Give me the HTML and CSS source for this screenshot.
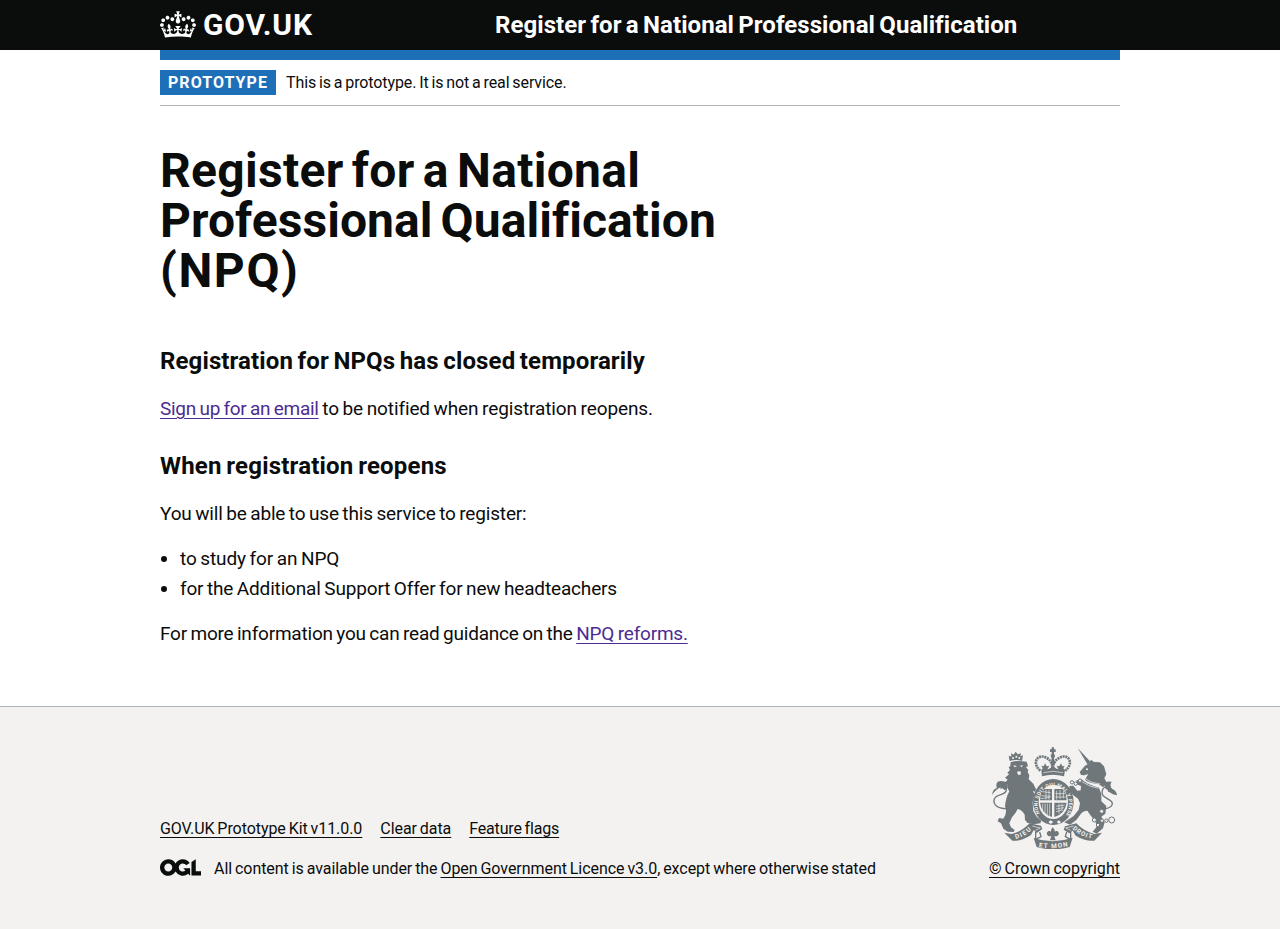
FILE: index.html
```html
<!DOCTYPE html>
<html lang="en">
<head>
<meta charset="utf-8">
<title>Register for a National Professional Qualification</title>
<link rel="stylesheet" href="styles.css">
</head>
<body>
<header class="header">
  <div class="container header-inner">
    <a class="logo" href="#">
      <svg class="logo-crown" viewBox="0 0 132 97" aria-hidden="true"><path fill="currentColor" fill-rule="evenodd" d="M25 30.2c3.5 1.5 7.7-.2 9.1-3.7 1.5-3.6-.2-7.8-3.9-9.2-3.6-1.4-7.6.3-9.1 3.9-1.4 3.5.3 7.5 3.9 9zM9 39.5c3.6 1.5 7.8-.2 9.2-3.7 1.5-3.6-.2-7.8-3.9-9.1-3.6-1.5-7.6.2-9.1 3.8-1.4 3.5.3 7.5 3.8 9zM4.4 57.2c3.5 1.5 7.7-.2 9.1-3.8 1.5-3.6-.2-7.7-3.9-9.1-3.5-1.5-7.6.3-9.1 3.8-1.4 3.5.3 7.6 3.9 9.1zm38.3-21.4c3.5 1.5 7.7-.2 9.1-3.8 1.5-3.6-.2-7.7-3.9-9.1-3.6-1.5-7.6.3-9.1 3.8-1.3 3.6.4 7.7 3.9 9.1zm64.4-5.6c-3.6 1.5-7.8-.2-9.1-3.7-1.5-3.6.2-7.8 3.8-9.2 3.6-1.4 7.7.3 9.2 3.9 1.3 3.5-.4 7.5-3.9 9zm15.9 9.3c-3.6 1.5-7.7-.2-9.1-3.7-1.5-3.6.2-7.8 3.7-9.1 3.6-1.5 7.7.2 9.2 3.8 1.5 3.5-.3 7.5-3.8 9zm4.7 17.7c-3.6 1.5-7.8-.2-9.2-3.8-1.5-3.6.2-7.7 3.9-9.1 3.6-1.5 7.7.3 9.2 3.8 1.3 3.5-.4 7.6-3.9 9.1zM89.3 35.8c-3.6 1.5-7.8-.2-9.2-3.8-1.4-3.6.2-7.7 3.9-9.1 3.6-1.5 7.7.3 9.2 3.8 1.4 3.6-.3 7.7-3.9 9.1zM69.7 17.7l8.9 4.7V9.3l-8.9 2.8c-.2-.3-.5-.6-.9-.9L72.4 0H59.6l3.5 11.2c-.3.3-.6.5-.9.9l-8.8-2.8v13.1l8.8-4.7c.3.3.6.7.9.9l-5 15.4v.1c-.2.8-.4 1.6-.4 2.4 0 4.1 3.1 7.5 7 8.1h.2c.3 0 .7.1 1 .1.4 0 .7 0 1-.1h.2c4-.6 7.1-4.1 7.1-8.1 0-.8-.1-1.7-.4-2.4V34l-5.1-15.4c.4-.2.7-.6 1-.9zM66 92.8c16.9 0 32.8 1.1 47.1 3.2 4-16.9 8.9-26.7 14-33.5l-9.6-3.4c1 4.9 1.1 7.2 0 10.2-1.5-1.4-3-4.3-4.2-8.7L108.6 76c2.8-2 5-3.2 7.5-3.3-4.4 9.4-10 11.9-13.6 11.2-4.3-.8-6.3-4.6-5.6-7.9 1-4.7 5.7-5.9 8-.5 4.3-8.7-3-11.4-7.6-8.8 7.1-7.2 7.9-13.5 2.1-21.1-8 6.1-8.1 12.3-4.5 20.8-4.7-5.4-12.1-2.5-9.5 6.2 3.4-5.2 7.9-2 7.2 3.1-.6 4.3-6.4 7.8-13.5 7.2-10.3-.9-10.9-8-11.2-13.8 2.5-.5 7.1 1.8 11 7.3L80.2 60c-4.1 4.4-8 5.3-12.3 5.4 1.4-4.4 8-11.6 8-11.6H55.5s6.4 7.2 7.9 11.6c-4.2-.1-8-1-12.3-5.4l1.4 16.4c3.9-5.5 8.5-7.7 10.9-7.3-.3 5.8-.9 12.8-11.1 13.8-7.2.6-12.9-2.9-13.5-7.2-.7-5 3.8-8.3 7.1-3.1 2.7-8.7-4.6-11.6-9.4-6.2 3.7-8.5 3.6-14.7-4.6-20.8-5.8 7.6-5 13.9 2.2 21.1-4.7-2.6-11.9.1-7.7 8.8 2.3-5.5 7.1-4.2 8.1.5.7 3.3-1.3 7.1-5.7 7.9-3.5.7-9-1.8-13.5-11.2 2.5.1 4.7 1.3 7.5 3.3l-4.7-15.4c-1.2 4.4-2.7 7.2-4.3 8.7-1.1-3-.9-5.3 0-10.2l-9.5 3.4c5 6.9 9.9 16.7 14 33.5 14.8-2.1 30.8-3.2 47.7-3.2z"/></svg>
      <span class="logo-text">GOV.UK</span>
    </a>
    <a class="service-name" href="#">Register for a National Professional Qualification</a>
  </div>
</header>
<div class="container">
  <div class="phase-banner">
    <strong class="tag">PROTOTYPE</strong>
    <span class="phase-text">This is a prototype. It is not a real service.</span>
  </div>
  <main class="main">
    <h1 class="heading-xl"><span class="title-line">Register for a National </span><span class="title-line title-middle">Professional Qualification </span><span class="title-line title-last">(NPQ)</span></h1>
    <h2 class="heading-m heading-closed">Registration for NPQs has closed temporarily</h2>
    <p class="body body-signup"><a class="link-visited link-tight" href="#">Sign up for an email</a> to be notified when registration reopens.</p>
    <h2 class="heading-m heading-follow">When registration reopens</h2>
    <p class="body">You will be able to use this service to register:</p>
    <ul class="list">
      <li class="list-short">to study for an NPQ</li>
      <li>for the Additional Support Offer for new headteachers</li>
    </ul>
    <p class="body body-guidance">For more information you can read guidance on the <a class="link-visited" href="#">NPQ reforms.</a></p>
  </main>
</div>
<footer class="footer">
  <div class="container footer-inner">
    <div class="footer-meta">
      <div class="footer-links">
        <a class="footer-link" href="#">GOV.UK Prototype Kit v11.0.0</a>
        <a class="footer-link" href="#">Clear data</a>
        <a class="footer-link footer-link-tight" href="#">Feature flags</a>
      </div>
      <div class="licence">
        <svg class="ogl" viewBox="0 0 483.2 195.7" aria-hidden="true"><path fill="currentColor" d="M421.5 142.8V.1l-50.7 32.3v161.1h112.4v-50.7zm-122.3-9.6A47.12 47.12 0 0 1 221 97.8c0-26 21.1-47.1 47.1-47.1 16.7 0 31.4 8.7 39.7 21.8l42.7-27.2A97.63 97.63 0 0 0 268.1 0c-36.5 0-68.3 20.1-85.1 49.7A98 98 0 0 0 97.8 0C43.9 0 0 43.9 0 97.8s43.9 97.8 97.8 97.8c36.5 0 68.3-20.1 85.1-49.7a97.76 97.76 0 0 0 149.6 25.4l19.4 22.2h3v-87.8h-80l24.3 27.5zM97.8 145c-26 0-47.1-21.1-47.1-47.1s21.1-47.1 47.1-47.1 47.1 21.1 47.1 47.1S123.8 145 97.8 145"/></svg>
        <span class="licence-text">All content is available under the <a class="footer-link" href="#">Open Government Licence v3.0</a>, except where otherwise stated</span>
      </div>
    </div>
    <a class="copyright" href="#">
      <svg class="crest" viewBox="36 21 375 306" aria-hidden="true">
        <defs>
          <path id="ring" d="M181 223A47 54 0 1 1 259 223"/>
          <path id="left-scroll" d="M107 297Q134 291 158 266"/>
          <path id="mid-scroll" d="M176 321Q220 329 266 318"/>
          <path id="right-scroll" d="M277 266Q301 291 339 297"/>
        </defs>
        <!-- lion -->
        <path class="ink" d="M89 63L86 47L94 50L93 40L101 44L107 35L113 43L123 40L121 49L129 46L126 63Q108 57 89 63z"/>
        <path class="ink" d="M92 67Q108 61 127 64L140 65L144 78L138 82L145 90L143 96L148 106L146 118L160 131L168 148L166 156L158 152L164 163Q158 176 158 190L160 214L170 230L184 242L181 250L160 253L143 249L135 240L134 224Q124 208 113 207Q108 219 96 232L88 250L93 262L104 270L101 276L83 275L70 266L63 250L53 244L57 234L70 236Q83 220 75 199Q77 174 88 154Q80 144 84 134L74 128L83 119L75 113L87 103L82 98L90 90L86 82L91 78z"/>
        <path class="line" d="M80 206C50 206 38 192 43 177C49 160 80 167 79 149C76 137 66 137 62 146"/>
        <path class="ink" d="M36 165Q38 147 51 144Q46 134 53 125Q68 120 82 128Q88 145 74 151L64 142Q50 145 36 165z"/>
        <g class="paper"><circle cx="99" cy="54" r="3"/><circle cx="109" cy="50" r="3"/><circle cx="118" cy="54" r="3"/><path d="M100 76l11 2-7 4zM120 77l10-1-6 6zM111 95q6-3 12 0l-2 10-7-1z"/></g>
        <!-- crown -->
        <path class="line dots" d="M181 92C155 70 171 43 194 51Q214 58 218 82Q223 58 244 51C267 43 282 70 256 92"/>
        <path class="ink" d="M215 42V36h-5v-8h5v-6h7v6h5v8h-5v6q6 6 0 12l3 19H212l3-19q-6-6 0-12z"/>
        <path class="ink" d="M184 91L188 85L184 77L191 79L195 70L200 79L208 77L202 88Q214 86 218 72Q224 87 235 88L230 77L238 79L243 70L247 79L254 77L250 85L255 91L252 109Q218 99 186 109z"/>
        <path class="paper-line" d="M190 98Q218 90 249 98"/>
        <!-- garter and shield -->
        <ellipse class="garter" cx="220" cy="186" rx="61" ry="69"/>
        <ellipse class="paper" cx="220" cy="186" rx="44" ry="51"/>
        <path class="ink" d="M187 147h29v34h-36q0-20 7-34zM223 147h29q8 15 8 34h-37zM180 188h36v43q-30-8-36-43zM223 188h37q-6 35-37 43z"/>
        <path class="paper-line" d="M187 155l25 3m-28 9l28 2m-30 7l28-4M198 149v30m9-30v30M230 152v27m10-29v27m10-25v23M226 161h29m-29 10h31M228 199l26-4m-26 12l24-4m-24 12l18-5M237 191v30m9-30v22M188 191v22m7-22v32m7-32v34m7-34v36"/>
        <text class="ring-text"><textPath href="#ring" startOffset="3" textLength="222">HONI SOIT QUI MAL Y PENSE</textPath></text>
        <path class="paper" d="M205 246l7-5 8 5-8 6zM230 246l7-5 6 5-6 6z"/>
        <!-- unicorn -->
        <path class="ink" d="M293 24L332 66L323 74z"/>
        <path class="ink" d="M315 77L328 70L333 59L342 66L360 67L372 79L379 103L373 114L379 126L370 142L355 132Q330 131 314 120L325 102L313 106L303 105L299 96z"/>
        <path class="ink" d="M304 118Q329 137 357 143L364 162L364 184L379 198L376 221L364 230L374 247L369 265L350 281L338 275L350 260L346 242Q330 226 322 212Q311 211 304 220L289 240L270 254L253 247L281 228L296 209L300 190L294 176L280 166L268 150L268 138L280 137L292 152L302 151L303 138L288 132L290 121z"/>
        <path class="paper-line" d="M312 114Q334 130 361 132M305 125Q330 141 355 145M312 125l7-6m1 13l7-7m1 11l8-6m1 10l8-6"/>
        <circle class="paper" cx="321" cy="88" r="3"/>
        <path class="line" d="M366 207C391 207 404 194 393 183C378 171 362 170 367 151C373 133 390 144 386 156"/>
        <path class="ink" d="M371 132Q375 122 395 125Q387 137 397 147Q410 152 411 166Q400 164 391 158L376 145z"/>
        <g class="chain"><circle cx="300" cy="122" r="5"/><circle cx="287" cy="131" r="5"/><circle cx="276" cy="127" r="5"/><circle cx="365" cy="214" r="6"/><circle cx="343" cy="240" r="6"/><circle cx="354" cy="255" r="5"/><circle cx="366" cy="242" r="5"/><circle cx="379" cy="242" r="5"/><circle cx="395" cy="240" r="9"/></g>
        <!-- motto scroll -->
        <path class="ink" d="M73 278L95 282Q125 275 149 250L183 257L187 267L170 279L161 270L153 285Q124 305 97 302z"/>
        <path class="ink" d="M366 278L343 282Q313 275 289 250L255 259L251 269L268 280L278 272L287 287Q317 305 343 302z"/>
        <path class="ink" d="M161 294Q218 314 278 293L269 321Q218 335 170 321z"/>
        <path class="paper-line" d="M157 258l24 6-15 7M281 258l-24 6 15 7"/>
        <path class="line" d="M167 276v22l16-8-4-14M272 276v22l-16-8 4-14"/>
        <text class="motto"><textPath href="#left-scroll" textLength="55">DIEU</textPath></text>
        <text class="motto"><textPath href="#mid-scroll" textLength="88">ET MON</textPath></text>
        <text class="motto"><textPath href="#right-scroll" textLength="66">DROIT</textPath></text>
        <path class="ink" d="M218 262q11 11 4 22q0-13 10-11q10 8-1 16h-8l4 12h-17l4-12h-8q-11-8-1-16q10-2 10 11q-6-11 3-22z"/>
      </svg>
      <span class="copyright-text">© Crown copyright</span>
    </a>
  </div>
</footer>
</body>
</html>
```
FILE: styles.css
```css
* { box-sizing: border-box; }
body { margin: 0; background: #fff; color: #0b0c0c; font-family: Roboto, "Liberation Sans", sans-serif; font-size: 19px; line-height: 25px; }
a { color: inherit; }
.container { width: 960px; margin: 0 auto; }

.header { background: #0b0c0c; color: #fff; height: 50px; }
.header-inner { display: grid; grid-template-columns: 335px 1fr; height: 60px; border-bottom: 10px solid #1d70b8; align-items: center; }
.logo { display: flex; align-items: center; gap: 7px; text-decoration: none; }
.logo-crown { width: 36px; height: 27px; margin-bottom: 2px; }
.logo-text { font-size: 30px; font-weight: 700; line-height: 30px; letter-spacing: .85px; }
.service-name { font-size: 24px; font-weight: 700; line-height: 30px; text-decoration: none; white-space: nowrap; letter-spacing: .06px; word-spacing: -1.7px; }

.phase-banner { display: flex; align-items: center; gap: 10px; margin-top: 10px; padding: 10px 0; border-bottom: 1px solid #b1b4b6; }
.tag { background: #1d70b8; color: #fff; font-size: 16px; line-height: 25px; height: 25px; padding: 0 8px; letter-spacing: 1.05px; }
.phase-text { font-size: 16px; line-height: 20px; letter-spacing: -.1px; word-spacing: -1px; }

.main { padding: 40px 0; letter-spacing: -.16px; word-spacing: -1px; }
.heading-xl { margin: 0 0 50px; font-size: 48px; line-height: 50px; font-weight: 700; letter-spacing: .3px; word-spacing: -4px; }
.title-line { display: block; height: 50px; }
.title-middle { letter-spacing: .06px; }
.title-last { letter-spacing: 1.6px; }
.heading-m { margin: 0 0 20px; font-size: 24px; line-height: 30px; font-weight: 700; letter-spacing: .2px; word-spacing: -1.5px; }
.heading-closed { letter-spacing: .12px; }
.heading-follow { padding-top: 10px; }
.body { margin: 0 0 20px; }
.body-signup { letter-spacing: -.11px; }
.body-guidance { letter-spacing: -.21px; }
.link-visited { color: #4c2c92; text-underline-offset: 3px; text-decoration-thickness: 1px; }
.link-tight { letter-spacing: -.27px; }
.list { margin: 0 0 20px; padding-left: 20px; }
.list li { margin-bottom: 5px; }
.list-short { letter-spacing: -.1px; }

.footer { border-top: 1px solid #b1b4b6; background: #f3f2f1; height: 223px; padding-top: 40px; font-size: 16px; line-height: 20px; letter-spacing: -.06px; word-spacing: -1px; }
.footer-inner { display: flex; justify-content: space-between; align-items: flex-end; }
.footer-links { display: flex; gap: 18px; margin-bottom: 20px; }
.footer-link, .copyright-text { text-decoration: underline; text-decoration-thickness: 1px; text-underline-offset: 3px; }
.footer-link-tight { letter-spacing: -.17px; }
.licence { display: flex; align-items: center; gap: 13px; }
.licence-text { letter-spacing: -.05px; }
.ogl { width: 41px; height: 17px; margin-bottom: 3px; }
.copyright { display: flex; flex-direction: column; align-items: center; gap: 10px; text-decoration: none; }
.copyright-text { letter-spacing: .03px; }

.crest { width: 125px; height: 102px; }
.ink, .garter { fill: #6f777b; }
.paper { fill: #f3f2f1; }
.line { fill: none; stroke: #6f777b; stroke-width: 4; }
.dots { stroke-width: 8; stroke-dasharray: 6 2; }
.paper-line { fill: none; stroke: #f3f2f1; stroke-width: 2; }
.chain { fill: #f3f2f1; stroke: #6f777b; stroke-width: 3; }
.ring-text, .motto { fill: #f3f2f1; font-family: Roboto, sans-serif; font-weight: 700; letter-spacing: 0; word-spacing: 0; }
.ring-text { font-size: 15px; }
.motto { font-size: 19px; }
```
